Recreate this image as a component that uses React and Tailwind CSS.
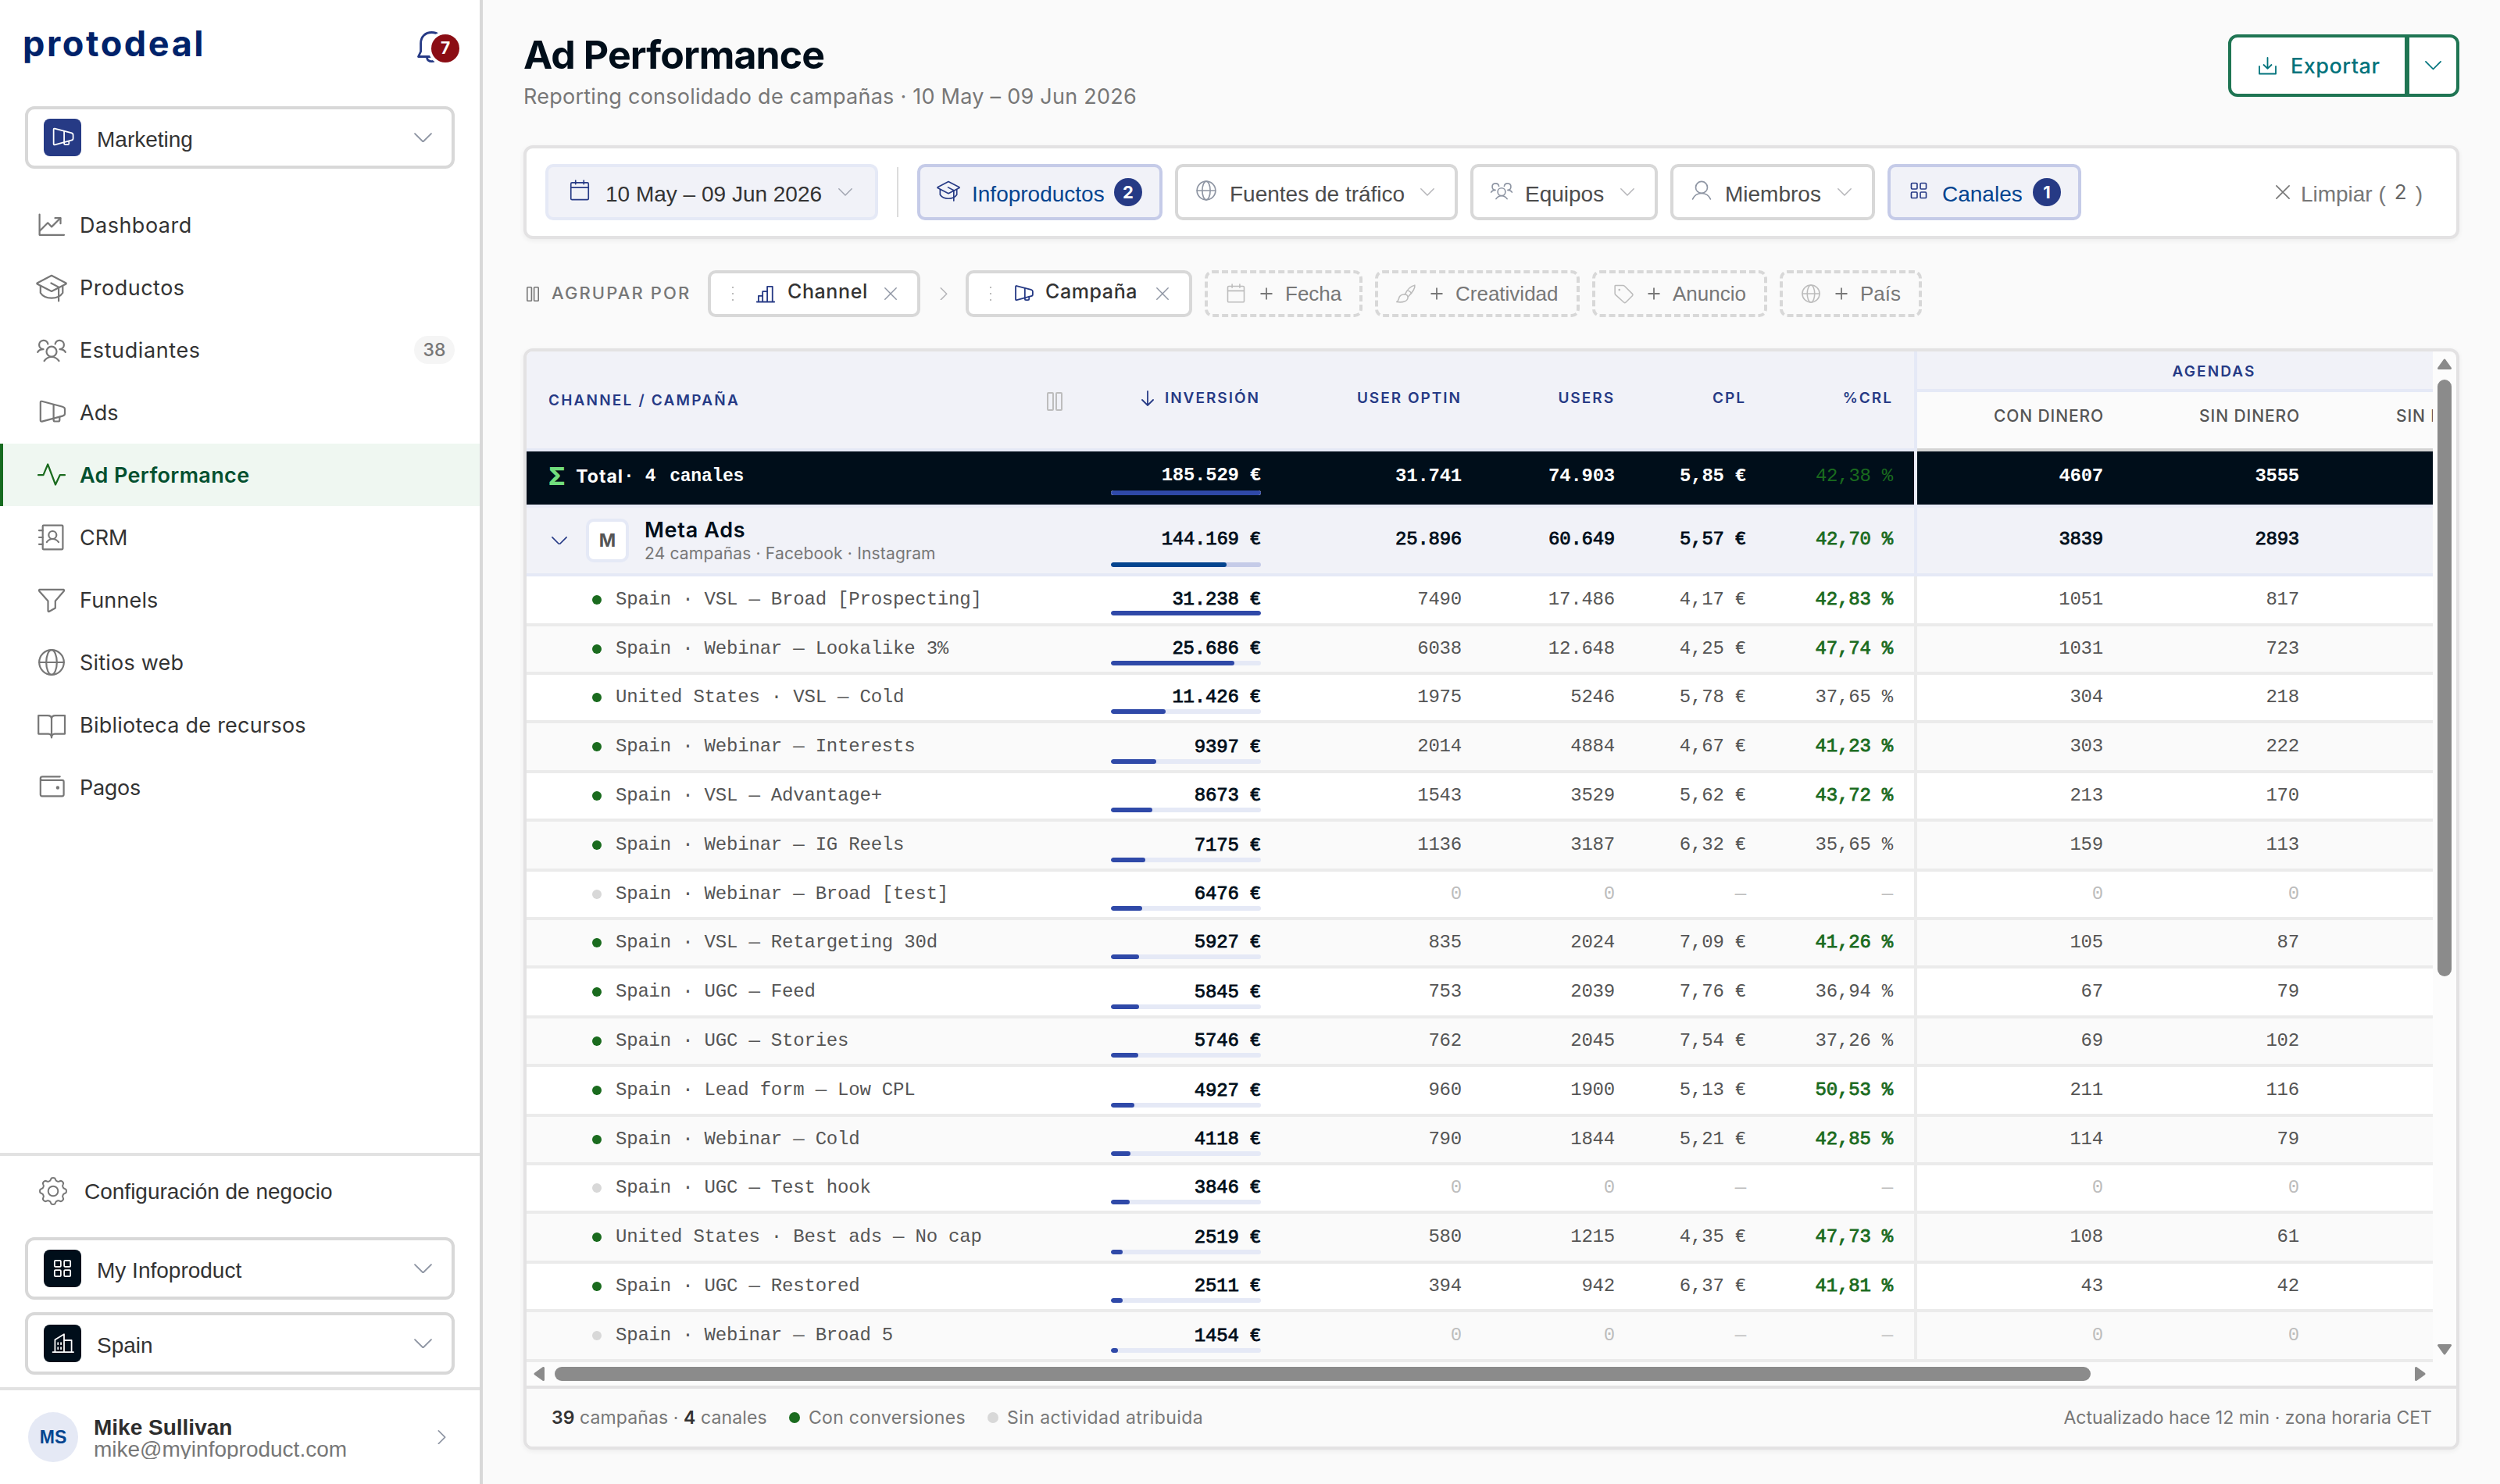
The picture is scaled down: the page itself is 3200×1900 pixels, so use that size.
import React from 'react';
import clsx from 'clsx';

// --- Icons (40x40 grid, thin strokes) ---

const Svg = ({ size = 40, sw = 2.2, className, children }) => (
  <svg
    width={size}
    height={size}
    viewBox="0 0 40 40"
    fill="none"
    stroke="currentColor"
    strokeWidth={sw}
    strokeLinecap="round"
    strokeLinejoin="round"
    className={clsx('shrink-0', className)}
  >
    {children}
  </svg>
);

const ChartIcon = (p) => (
  <Svg {...p}>
    <path d="M4.6 6.5V32.8H36" />
    <path d="M5 27.5 15.2 17.3 20.1 22.4 31.3 11.2" />
    <path d="M24.5 11.2H31.5V18.2" />
  </Svg>
);

const CapIcon = (p) => (
  <Svg {...p}>
    <path d="M20 4.8 1.5 14.4Q1.2 15 1.5 15.4L20 25 38.6 15.4Q38.9 15 38.6 14.4Z" />
    <path d="M5.8 18.5V27C8.5 31.2 13.5 33.6 20 33.6S31.5 31.2 34.3 27V18.5" />
    <path d="M19.4 14.5 29.1 19.6V37.4" />
  </Svg>
);

const PeopleIcon = (p) => (
  <Svg {...p}>
    <circle cx="20" cy="22.2" r="6.5" />
    <path d="M10.6 34.2C12.6 31 16 29 20 29S27.400 31 29.500 34.200" />
    <path d="M15.400 12.500A5.700 5.700 0 1 0 9.500 19.200M2.200 22.800C3.600 20.600 6 19.200 9.500 19.200" />
    <path d="M24.600 12.500A5.700 5.700 0 1 1 30.500 19.200M37.800 22.800C36.400 20.600 34 19.200 30.500 19.200" />
  </Svg>
);

const MegaphoneIcon = (p) => (
  <Svg {...p}>
    <path d="M7.600 5.800 34 12.700Q37 13.500 37 16V21.500Q37 24 34 24.600L7.800 31.600Q5.800 32 5.800 30.200V7.200Q5.800 5.400 7.600 5.800Z" />
    <path d="M22.600 10V28.200" />
    <path d="M22.600 28.500V29.700Q22.600 31.500 24.400 31.500H28.500Q30.300 31.500 30.300 29.700V25.800" />
  </Svg>
);

const PulseIcon = (p) => (
  <Svg {...p}>
    <path d="M3 20.200H9.500L15.200 6.500 25 32.500 30.700 20.200H37" />
  </Svg>
);

const ContactsIcon = (p) => (
  <Svg {...p}>
    <rect x="8.700" y="4.700" width="25.700" height="30.600" rx="1" />
    <path d="M4 11.200H8.700M4 20H8.700M4 28.800H8.700" />
    <circle cx="21.300" cy="17" r="5" />
    <path d="M13.800 26.200C15.500 23.600 18 22 21.300 22S27.200 23.600 29 26.200" />
  </Svg>
);

const FunnelIcon = (p) => (
  <Svg {...p}>
    <path d="M4.500 6.800H35.500Q36.500 7.800 35.600 9L24.800 21.500V30.500L16.800 35Q15.500 35.300 15.500 34V21.500L4.400 9Q3.500 7.800 4.500 6.800Z" />
  </Svg>
);

const GlobeIcon = (p) => (
  <Svg {...p}>
    <circle cx="20" cy="20" r="15.800" />
    <ellipse cx="20" cy="20" rx="6.800" ry="15.800" />
    <path d="M4.200 20H35.800" />
  </Svg>
);

const BookIcon = (p) => (
  <Svg {...p}>
    <path d="M3.200 8.200H15Q20 8.200 20 12.500 20 8.200 25 8.200H37V31.600H24Q20 31.600 20 36.500 20 31.600 16 31.600H3.200Z" />
    <path d="M20 12.500V33" />
  </Svg>
);

const WalletIcon = (p) => (
  <Svg {...p}>
    <path d="M30.700 6.300H8.500Q5.800 6.300 5.800 8.600 5.800 10.900 8.500 10.900H33.600Q35.600 10.900 35.600 12.900V29.300Q35.600 31.300 33.600 31.300H7.800Q5.800 31.300 5.800 29.300V8.600" />
    <circle cx="27.900" cy="20.500" r="1.100" fill="currentColor" />
  </Svg>
);

const GridIcon = (p) => (
  <Svg {...p}>
    <rect x="7.300" y="7.300" width="10" height="10" rx="1.500" />
    <rect x="22.700" y="7.300" width="10" height="10" rx="1.500" />
    <rect x="7.300" y="22.700" width="10" height="10" rx="1.500" />
    <rect x="22.700" y="22.700" width="10" height="10" rx="1.500" />
  </Svg>
);

const BuildingIcon = (p) => (
  <Svg {...p}>
    <path d="M4.500 34H37.500M8 34V14L22.500 5.200V34M22.500 15H34.500V34" />
    <path d="M12.800 19V21.500M17.600 19V21.500M12.800 26.500V29M17.600 26.500V29" />
  </Svg>
);

const CalendarIcon = (p) => (
  <Svg {...p}>
    <rect x="5" y="6.500" width="30" height="29" rx="2" />
    <path d="M5 14.800H35M13 2.800V9M27 2.800V9" />
  </Svg>
);

const UserIcon = (p) => (
  <Svg {...p}>
    <circle cx="20" cy="14.500" r="10" />
    <path d="M4.800 34.500C7.500 28.500 13 24.700 20 24.700S32.500 28.500 35.200 34.500" />
  </Svg>
);

const BarsIcon = (p) => (
  <Svg {...p}>
    <path d="M4 35H36M7 35V24H14.500V35M14.500 35V16H23V35M23 35V7H32.500V35" />
  </Svg>
);

const BrushIcon = (p) => (
  <Svg {...p}>
    <path d="M17.500 21.500C21 14 28 6 35.500 4.500 37 11 29 20 23 26" />
    <path d="M17.500 21.500C21 21.500 23.500 24 23 27.500 22 34 14 36.800 2.500 35 6.500 33.500 5.500 29 8 25 10 22.200 14 21 17.500 21.500Z" />
    <path d="M24 14.500Q28 16.500 29.500 19.500" />
  </Svg>
);

const TagIcon = (p) => (
  <Svg {...p}>
    <path d="M4.500 6Q4.500 5 5.500 5H19.500Q21 5 22 6L36.500 20.500Q37.800 22 36.500 23.500L24 36Q22.500 37.200 21 36L5.500 22Q4.500 21 4.500 19.500Z" />
    <circle cx="12.500" cy="13" r=".8" fill="currentColor" />
  </Svg>
);

const ColumnsIcon = ({ className }) => (
  <svg viewBox="0 0 20 24" fill="none" stroke="currentColor" strokeWidth="2" className={className} preserveAspectRatio="none">
    <rect x="1" y="1" width="7" height="22" rx="1" />
    <rect x="12" y="1" width="7" height="22" rx="1" />
  </svg>
);

const Chevron = ({ className }) => (
  <svg viewBox="0 0 22 12" fill="none" stroke="currentColor" strokeWidth="1.800" strokeLinecap="round" strokeLinejoin="round" className={clsx('shrink-0', className)}>
    <path d="M1 1 11 11 21 1" />
  </svg>
);

const ChevronRight = ({ className }) => (
  <svg viewBox="0 0 12 20" fill="none" stroke="currentColor" strokeWidth="1.800" strokeLinecap="round" strokeLinejoin="round" className={clsx('shrink-0', className)}>
    <path d="M1.500 1 10.500 10 1.500 19" />
  </svg>
);

const Cross = ({ className }) => (
  <svg viewBox="0 0 20 20" fill="none" stroke="currentColor" strokeWidth="1.800" strokeLinecap="round" className={clsx('shrink-0', className)}>
    <path d="M1 1 19 19M19 1 1 19" />
  </svg>
);

const Plus = ({ className }) => (
  <svg viewBox="0 0 16 16" fill="none" stroke="currentColor" strokeWidth="1.800" className={clsx('shrink-0', className)}>
    <path d="M8 .5V15.500M.5 8H15.500" />
  </svg>
);

// scalloped cog outline
const COG = Array.from({ length: 97 }, (_, i) => {
  const a = (i / 96) * Math.PI * 2;
  const r = 17 + 1.9 * Math.tanh(2 * Math.cos(8 * a));
  return `${i ? 'L' : 'M'}${(20 + r * Math.sin(a)).toFixed(2)} ${(20 - r * Math.cos(a)).toFixed(2)}`;
}).join('');

const CogIcon = (p) => (
  <Svg {...p}>
    <path d={COG} />
    <circle cx="20" cy="20" r="7" />
  </Svg>
);

// --- Data ---

const NAV = [
  { label: 'Dashboard', icon: ChartIcon, track: 'tracking-[0.5px]' },
  { label: 'Productos', icon: CapIcon, track: 'tracking-[0.5px]' },
  { label: 'Estudiantes', icon: PeopleIcon, badge: '38', track: 'tracking-[0.6px]' },
  { label: 'Ads', icon: MegaphoneIcon, track: 'tracking-normal' },
  { label: 'Ad Performance', icon: PulseIcon, active: true, track: 'tracking-[0.35px]' },
  { label: 'CRM', icon: ContactsIcon, track: 'tracking-normal' },
  { label: 'Funnels', icon: FunnelIcon, track: 'tracking-[0.15px]' },
  { label: 'Sitios web', icon: GlobeIcon, track: 'tracking-[0.2px]' },
  { label: 'Biblioteca de recursos', icon: BookIcon, track: 'tracking-[0.25px]' },
  { label: 'Pagos', icon: WalletIcon, track: 'tracking-[-0.3px]' },
];

const ROWS = [
  ['Spain · VSL — Broad [Prospecting]', 31238, '7490', '17.486', '4,17 €', '42,83 %', '1051', '817', 64],
  ['Spain · Webinar — Lookalike 3%', 25686, '6038', '12.648', '4,25 €', '47,74 %', '1031', '723', 62],
  ['United States · VSL — Cold', 11426, '1975', '5246', '5,78 €', '37,65 %', '304', '218', 62],
  ['Spain · Webinar — Interests', 9397, '2014', '4884', '4,67 €', '41,23 %', '303', '222', 64],
  ['Spain · VSL — Advantage+', 8673, '1543', '3529', '5,62 €', '43,72 %', '213', '170', 62],
  ['Spain · Webinar — IG Reels', 7175, '1136', '3187', '6,32 €', '35,65 %', '159', '113', 64],
  ['Spain · Webinar — Broad [test]', 6476, '0', '0', '—', '—', '0', '0', 62],
  ['Spain · VSL — Retargeting 30d', 5927, '835', '2024', '7,09 €', '41,26 %', '105', '87', 62],
  ['Spain · UGC — Feed', 5845, '753', '2039', '7,76 €', '36,94 %', '67', '79', 64],
  ['Spain · UGC — Stories', 5746, '762', '2045', '7,54 €', '37,26 %', '69', '102', 62],
  ['Spain · Lead form — Low CPL', 4927, '960', '1900', '5,13 €', '50,53 %', '211', '116', 64],
  ['Spain · Webinar — Cold', 4118, '790', '1844', '5,21 €', '42,85 %', '114', '79', 62],
  ['Spain · UGC — Test hook', 3846, '0', '0', '—', '—', '0', '0', 62],
  ['United States · Best ads — No cap', 2519, '580', '1215', '4,35 €', '47,73 %', '108', '61', 64],
  ['Spain · UGC — Restored', 2511, '394', '942', '6,37 €', '41,81 %', '43', '42', 62],
  ['Spain · Webinar — Broad 5', 1454, '0', '0', '—', '—', '0', '0', 64],
];

const money = (n) => `${n >= 10000 ? `${Math.floor(n / 1000)}.${String(n % 1000).padStart(3, '0')}` : n} €`;

const COLS = 'grid grid-cols-[712px_254px_258px_196px_168px_192px_265px_251px_244px]';
const ARIAL = "font-['Liberation_Sans',sans-serif]";
const MONO = "font-['Liberation_Mono',monospace]";
// the mono face has no medium weight, thicken the regular one a little
const MEDIUM = '[-webkit-text-stroke:0.8px_currentColor]';

// --- Sidebar ---

const SidebarSelect = ({ label, icon: Icon, dark }) => (
  <div className="flex h-20 w-[550px] items-center rounded-xl border-4 border-[#d8d8d8] bg-white pl-5 pr-[25px]">
    <span className={clsx('flex size-12 items-center justify-center rounded-lg text-white', dark ? 'bg-[#000e1a]' : 'bg-[#263a85]')}>
      <Icon size={32} sw={2.2} />
    </span>
    <span className={`${ARIAL} ml-5 pt-[5px] text-[28px] leading-8 text-[#333]`}>{label}</span>
    <Chevron className="ml-auto w-[23px] text-[#8e95a3]" />
  </div>
);

const Sidebar = () => (
  <aside className="flex h-full w-[618px] shrink-0 flex-col border-r-4 border-[#d8d8d8] bg-white">
    <div className="flex h-[110px] items-center justify-between pl-[29px] pr-[26px]">
      <span className="text-[45px] font-bold leading-none tracking-[2.6px] text-[#00226a]">protodeal</span>
      <div className="relative h-11 w-[54px] translate-y-[7px]">
        <svg width="40" height="42" viewBox="0 0 40 42" fill="none" stroke="#263a85" strokeWidth="2.800" strokeLinejoin="round" strokeLinecap="round">
          <path d="M1.500 32.500 4.600 26V15.500C4.600 7 10.500 1.500 18.500 1.500S32.400 7 32.400 15.500V26L35.500 32.500Z" />
          <path d="M12.500 34C13 37 15.500 38.600 18.500 38.600S24 37 24.500 34" />
        </svg>
        <span className="absolute left-[18px] top-[4px] flex size-9 items-center justify-center rounded-full bg-[#8b0d14] text-[21px] font-bold text-white ring-4 ring-white">7</span>
      </div>
    </div>

    <div className="mt-[26px] pl-8">
      <SidebarSelect label="Marketing" icon={MegaphoneIcon} />
    </div>

    <nav className="mt-8">
      {NAV.map(({ label, icon: Icon, badge, active, track }) => (
        <div
          key={label}
          className={clsx('flex h-20 items-center border-l-4 pl-[42px] pr-8', active ? 'border-[#166b1f] bg-[#eff7f1]' : 'border-transparent')}
        >
          <Icon size={40} className={active ? 'text-[#1a6b1e]' : 'text-[#777]'} />
          <span className={clsx('ml-4 pt-[2px] text-[27px]', track, active ? 'font-semibold text-[#03502f]' : 'text-[#333]')}>{label}</span>
          {badge && (
            <span className="ml-auto flex h-9 w-[52px] items-center justify-center rounded-full bg-[#f5f5f5] text-[23px] font-medium text-[#777]">{badge}</span>
          )}
        </div>
      ))}
    </nav>

    <div className="mt-auto border-t-4 border-[#e2e2e2]">
      <div className="flex h-[84px] items-center pl-[50px] pt-[5px]">
        <CogIcon size={36} className="text-[#777]" />
        <span className={`${ARIAL} ml-[22px] pt-[3px] text-[28px] leading-8 text-[#333]`}>Configuración de negocio</span>
      </div>
      <div className="mt-5 flex flex-col gap-4 pb-4 pl-8">
        <SidebarSelect label="My Infoproduct" icon={GridIcon} dark />
        <SidebarSelect label="Spain" icon={BuildingIcon} dark />
      </div>
    </div>

    <div className="flex h-[124px] items-center border-t-4 border-[#e2e2e2] pl-9 pr-[43px]">
      <span className={`${ARIAL} flex size-16 items-center justify-center rounded-full bg-[#e5e9f5] text-[23px] font-bold text-[#04448f]`}>MS</span>
      <div className={`${ARIAL} ml-5 text-[28px] leading-7`}>
        <div className="pt-[2px] font-bold text-[#2e2e2e]">Mike Sullivan</div>
        <div className="h-[26px] overflow-hidden text-[#777]">mike@myinfoproduct.com</div>
      </div>
      <ChevronRight className="ml-auto w-[11px] text-[#8e95a3]" />
    </div>
  </aside>
);

// --- Filters ---

const FilterButton = ({ label, icon: Icon, width, count }) => (
  <div
    className={clsx(
      'flex h-[72px] items-center rounded-[10px] border-4 pl-[21px]',
      width,
      count ? 'border-[#c5cbe8] bg-[#f1f2f8] pr-[22px] text-[#04448f]' : 'border-[#d8d8d8] bg-white pr-[26px] text-[#4c4c4c]'
    )}
  >
    <Icon size={30} className={clsx('-translate-y-[2px]', count ? 'text-[#263a85]' : 'text-[#8e95a3]')} />
    <span className={`${ARIAL} ml-[15px] whitespace-nowrap pt-[5px] text-[28px] leading-8`}>{label}</span>
    {count ? (
      <span className="ml-auto flex size-9 items-center justify-center rounded-full bg-[#263a85] text-[22px] font-bold text-white">{count}</span>
    ) : (
      <Chevron className="ml-auto w-[18px] text-[#b4b4b8]" />
    )}
  </div>
);

const FilterBar = () => (
  <div className="mt-[42px] flex h-[120px] items-center rounded-xl border-4 border-[#e3e2e3] bg-white px-6 shadow-[0_2px_6px_rgba(0,0,0,0.06)]">
    <div className="flex h-[72px] w-[426px] items-center rounded-[10px] border-4 border-[#e5e9f6] bg-[#f1f2f8] pl-[25px] pr-[29px]">
      <CalendarIcon size={30} className="-translate-y-[2px] text-[#263a85]" />
      <span className={`${ARIAL} ml-[18px] whitespace-nowrap pt-[5px] text-[28px] leading-8 text-[#333]`}>10 May – 09 Jun 2026</span>
      <Chevron className="ml-auto w-[18px] text-[#a0a4b0]" />
    </div>
    <div className="mx-6 h-16 w-[2px] bg-[#dcdcdc]" />
    <div className="flex gap-4">
      <FilterButton label="Infoproductos" icon={CapIcon} width="w-[314px]" count={2} />
      <FilterButton label="Fuentes de tráfico" icon={GlobeIcon} width="w-[362px]" />
      <FilterButton label="Equipos" icon={PeopleIcon} width="w-[240px]" />
      <FilterButton label="Miembros" icon={UserIcon} width="w-[262px]" />
      <FilterButton label="Canales" icon={GridIcon} width="w-[248px]" count={1} />
    </div>
    <div className={`${ARIAL} ml-auto flex items-center pr-[19px] text-[28px] leading-8 text-[#777]`}>
      <Cross className="w-[18px]" />
      <span className="ml-[14px] pt-[5px]">Limpiar (</span>
      <span className="mx-[11px] font-['Inter'] text-[26px] text-[#666]">2</span>
      <span className="pt-[5px]">)</span>
    </div>
  </div>
);

const GroupChip = ({ label, icon: Icon, width }) => (
  <div className={clsx('flex h-[60px] items-center rounded-[10px] border-4 border-[#d8d8d8] bg-white pr-[26px]', width)}>
    <div className="ml-[27px] flex h-[18px] w-[2px] flex-col justify-between">
      <span className="h-[2px] bg-[#bbb]" />
      <span className="h-[2px] bg-[#bbb]" />
      <span className="h-[2px] bg-[#bbb]" />
    </div>
    <Icon size={28} sw={2.6} className="ml-[27px] text-[#263a85]" />
    <span className="ml-[14px] pb-[5px] text-[25px] font-medium tracking-[0.6px] text-[#333]">{label}</span>
    <Cross className="ml-auto w-4 text-[#8e95a3]" />
  </div>
);

const AddChip = ({ label, icon: Icon, width }) => (
  <div className={clsx('flex h-[60px] items-center rounded-[10px] border-4 border-dashed border-[#d8d8d8] pl-[22px] text-[#777]', width)}>
    <Icon size={28} className="text-[#bcbcbc]" />
    <Plus className="ml-[17px] w-4" />
    <span className={`${ARIAL} ml-4 text-[26px] leading-8`}>{label}</span>
  </div>
);

const GroupRow = () => (
  <div className="mt-10 flex h-[60px] items-center">
    <ColumnsIcon className="ml-1 h-[19px] w-4 text-[#777]" />
    <span className="ml-4 w-[200px] pb-[2px] text-[22px] font-medium tracking-[2.1px] text-[#777]">AGRUPAR POR</span>
    <GroupChip label="Channel" icon={BarsIcon} width="w-[272px]" />
    <ChevronRight className="ml-[25px] mr-[23px] w-[10px] text-[#b4b4b8]" />
    <GroupChip label="Campaña" icon={MegaphoneIcon} width="w-[290px]" />
    <div className="ml-4 flex gap-4">
      <AddChip label="Fecha" icon={CalendarIcon} width="w-[202px]" />
      <AddChip label="Creatividad" icon={BrushIcon} width="w-[262px]" />
      <AddChip label="Anuncio" icon={TagIcon} width="w-[224px]" />
      <AddChip label="País" icon={GlobeIcon} width="w-[182px]" />
    </div>
  </div>
);

// --- Table ---

const Bar = ({ pct, fill = 'bg-[#2f49a8]', track = 'bg-[#e5e9f6]' }) => (
  <div className={clsx('h-[6px] w-48 shrink-0 overflow-hidden rounded-full', track)}>
    <div className={clsx('h-full rounded-full', fill)} style={{ width: `${pct}%` }} />
  </div>
);

const Num = ({ children, className }) => (
  <div className={clsx('flex items-center justify-end pr-[27px]', (children === '0' || children === '—') && 'text-[#bdbdbd]', className)}>
    {children}
  </div>
);

const HeadCell = ({ children, className }) => (
  <div className={clsx('row-span-2 flex items-center justify-end border-b-4 border-[#e5e9f6] bg-[#f1f2f8] pb-1 pr-[27px] text-[19px] font-semibold tracking-[2px] text-[#263a85]', className)}>
    {children}
  </div>
);

const SubHead = ({ children }) => (
  <div className="flex items-center justify-end whitespace-nowrap border-b-4 border-[#d4d4d4] bg-[#fbfbfb] pb-[11px] pr-[26px] text-[21px] font-medium tracking-[0.9px] text-[#555]">
    {children}
  </div>
);

const TableHead = () => (
  <div className={`${COLS} grid-rows-[52px_76px]`}>
    <div className="row-span-2 flex items-center justify-between border-b-4 border-[#e5e9f6] bg-[#f1f2f8] pl-7 pr-[26px] pt-[3px] text-[19px] font-semibold tracking-[2.2px] text-[#263a85]">
      CHANNEL / CAMPAÑA
      <ColumnsIcon className="h-6 w-5 text-[#bdbdbd]" />
    </div>
    <HeadCell className="text-[#000e1a]">
      <svg width="16" height="20" viewBox="0 0 16 20" fill="none" stroke="#263a85" strokeWidth="1.800" strokeLinecap="round" className="mr-[14px]">
        <path d="M8 1V19M1 12 8 19 15 12" />
      </svg>
      INVERSIÓN
    </HeadCell>
    <HeadCell>USER OPTIN</HeadCell>
    <HeadCell>USERS</HeadCell>
    <HeadCell>CPL</HeadCell>
    <HeadCell className="border-r-4">%CRL</HeadCell>
    <div className="col-span-3 flex items-center justify-center border-b-4 border-[#e5e9f6] bg-[#f1f2f8] pt-1 text-[19px] font-semibold tracking-[2.1px] text-[#263a85]">
      AGENDAS
    </div>
    <SubHead>CON DINERO</SubHead>
    <SubHead>SIN DINERO</SubHead>
    <div className="flex items-center whitespace-nowrap border-b-4 border-[#d4d4d4] bg-[#fbfbfb] pb-[11px] pl-[97px] text-[21px] font-medium tracking-[0.9px] text-[#555]">
      SIN LLAMADA
    </div>
  </div>
);

const TotalRow = () => (
  <div className={`${COLS} ${MONO} h-[72px] bg-[#000e1a] text-[24px] font-bold leading-6 tracking-[-0.25px] text-white *:border-b-4 *:border-[#e9ebf7]`}>
    <div className="flex items-center pb-[5px] pl-7">
      <span className="font-['Inter'] text-[31px] font-extrabold leading-6 text-[#71dd7d]">Σ</span>
      <span className="ml-[14px] font-['Inter'] text-[23px] tracking-[1px]">Total</span>
      <span className="text-[23px]">·</span>
      <span className="ml-[14px] text-[23px]">4</span>
      <span className="ml-[18px] text-[23px]">canales</span>
    </div>
    <div className="flex flex-col items-end justify-end gap-[7px] pb-3 pr-[26px]">
      185.529 €
      <Bar pct={100} />
    </div>
    <Num className="pb-[5px]">31.741</Num>
    <Num className="pb-[5px]">74.903</Num>
    <Num className="pb-[5px]">5,85 €</Num>
    <Num className="border-r-4 pb-[5px] font-normal text-[#1a6b1e]">42,38 %</Num>
    <Num className="pb-[5px]">4607</Num>
    <Num className="pb-[5px]">3555</Num>
    <Num />
  </div>
);

const ChannelRow = () => (
  <div className={`${COLS} ${MONO} ${MEDIUM} h-[88px] bg-[#f1f2f8] text-[24px] leading-6 tracking-[-0.25px] text-[#000e1a] *:border-b-4 *:border-[#e5e9f6]`}>
    <div className="flex items-center pl-8 font-['Inter'] tracking-normal [-webkit-text-stroke:0]">
      <Chevron className="w-5 text-[#263a85]" />
      <span className="ml-6 flex h-14 w-[55px] items-center justify-center rounded-[10px] border-4 border-[#e5e9f6] bg-white text-[23px] font-bold text-[#555]">M</span>
      <div className="ml-5">
        <div className="pt-[2px] text-[27px] font-semibold leading-8 tracking-[0.7px]">Meta Ads</div>
        <div className="text-[21px] leading-7 tracking-[0.18px] text-[#777]">24 campañas · Facebook · Instagram</div>
      </div>
    </div>
    <div className="flex flex-col items-end justify-end gap-[17px] pb-2 pr-[26px]">
      144.169 €
      <Bar pct={77.2} fill="bg-[#04448f]" track="bg-[#c5cbe8]" />
    </div>
    <Num className="pb-[3px]">25.896</Num>
    <Num className="pb-[3px]">60.649</Num>
    <Num className="pb-[3px]">5,57 €</Num>
    <Num className="border-r-4 pb-[3px] text-[#1a6b1e]">42,70 %</Num>
    <Num className="pb-[3px]">3839</Num>
    <Num className="pb-[3px]">2893</Num>
    <Num />
  </div>
);

const CampaignRow = ({ row, index }) => {
  const [name, spend, optin, users, cpl, crl, withMoney, noMoney, height] = row;
  const idle = optin === '0';
  return (
    <div
      className={clsx(
        COLS,
        MONO,
        'text-[24px] leading-6 tracking-[-0.2px] text-[#555] *:border-b-4 *:border-[#ebebeb]',
        height === 64 ? 'h-16' : 'h-[62px]',
        index % 2 ? 'bg-[#fafafa]' : 'bg-white'
      )}
    >
      <div className="flex items-center pl-[84px]">
        <span className={clsx('size-3 rounded-full', idle ? 'bg-[#d8d8d8]' : 'bg-[#1a6b1e]')} />
        <span className="ml-[18px] whitespace-pre">{name}</span>
      </div>
      <div className={clsx('flex flex-col items-end justify-end pr-[26px] text-[#000e1a]', MEDIUM, index ? 'gap-[3px] pb-2' : 'gap-[2px] pb-[10px]')}>
        {money(spend)}
        <Bar pct={(spend / 31238) * 100} />
      </div>
      <Num>{optin}</Num>
      <Num>{users}</Num>
      <Num>{cpl}</Num>
      <Num className={clsx('border-r-4 border-r-[#e5e9f6]', parseFloat(crl) > 40 && [MEDIUM, 'text-[#1a6b1e]'])}>{crl}</Num>
      <Num>{withMoney}</Num>
      <Num>{noMoney}</Num>
      <Num />
    </div>
  );
};

const Arrow = ({ d, w, h }) => (
  <svg width={w} height={h} viewBox={`0 0 ${w} ${h}`} fill="#8b8b8b" stroke="#8b8b8b" strokeWidth="3" strokeLinejoin="round">
    <path d={d} />
  </svg>
);

const PerformanceTable = () => (
  <div className="mt-10 flex h-[1410px] flex-col overflow-hidden rounded-xl border-4 border-[#e3e2e3] bg-[#fcfcfc] shadow-[0_2px_6px_rgba(0,0,0,0.06)]">
    <div className="flex h-[1294px]">
      <div className="w-[2440px] overflow-hidden">
        <div className="w-[2540px]">
          <TableHead />
          <TotalRow />
          <ChannelRow />
          {ROWS.map((row, i) => (
            <CampaignRow key={row[0]} row={row} index={i} />
          ))}
        </div>
      </div>
      <div className="flex w-[30px] flex-col items-center pb-[9px] pt-[9px]">
        <Arrow w={18} h={14} d="M9 2 16.500 12.500H1.500Z" />
        <div className="mt-[13px] h-[764px] w-[18px] rounded-full bg-[#8b8b8b]" />
        <div className="mt-auto">
          <Arrow w={18} h={14} d="M9 12 16.500 1.500H1.500Z" />
        </div>
      </div>
    </div>
    <div className="flex h-[30px] items-center pl-[9px] pr-[39px]">
      <Arrow w={14} h={18} d="M2 9 12.500 1.500V16.500Z" />
      <div className="ml-[13px] h-[18px] w-[1966px] rounded-full bg-[#8b8b8b]" />
      <div className="ml-auto">
        <Arrow w={14} h={18} d="M12 9 1.500 1.500V16.500Z" />
      </div>
    </div>
    <div className="flex flex-1 items-center border-t-4 border-[#e3e2e3] bg-[#fafafa] pl-8 pr-[31px] text-[23px] text-[#777]">
      <span className="w-[304px] whitespace-nowrap tracking-[0.1px]">
        <b className="font-semibold text-[#333]">39</b> campañas · <b className="font-semibold text-[#333]">4</b> canales
      </span>
      <span className="size-[14px] rounded-full bg-[#1a6b1e]" />
      <span className="ml-[11px] w-[229px] tracking-[0.3px]">Con conversiones</span>
      <span className="size-[14px] rounded-full bg-[#d8d8d8]" />
      <span className="ml-[11px] tracking-[0.45px]">Sin actividad atribuida</span>
      <span className="ml-auto tracking-[0.04px]">Actualizado hace 12 min · zona horaria CET</span>
    </div>
  </div>
);

export default function App() {
  return (
    <div className="flex h-[1900px] w-[3200px] overflow-hidden bg-[#fafafa] font-['Inter',sans-serif]">
      <Sidebar />

      <main className="flex flex-1 flex-col px-[52px] pt-10">
        <header className="flex justify-between">
          <div>
            <h1 className="text-[50px] font-bold leading-[60px] tracking-[-0.9px] text-[#000e1a]">Ad Performance</h1>
            <p className="mt-1 text-[27px] leading-10 tracking-[0.25px] text-[#777]">Reporting consolidado de campañas · 10 May – 09 Jun 2026</p>
          </div>
          <div className="mt-1 flex h-20 w-[296px] overflow-hidden rounded-xl border-4 border-[#1f7553] bg-white text-[#00737c]">
            <div className="flex w-[222px] items-center pl-[35px]">
              <svg width="23" height="23" viewBox="0 0 23 23" fill="none" stroke="currentColor" strokeWidth="1.800" strokeLinecap="round" strokeLinejoin="round">
                <path d="M11.500 1V14.500M6.500 10 11.500 14.800 16.500 10M1 12V21.500H22V12" />
              </svg>
              <span className="ml-[18px] pt-[2px] text-[27px] font-medium tracking-[0.5px]">Exportar</span>
            </div>
            <div className="flex flex-1 items-center justify-center border-l-6 border-[#1f7553]">
              <Chevron className="w-[21px]" />
            </div>
          </div>
        </header>

        <FilterBar />
        <GroupRow />
        <PerformanceTable />
      </main>
    </div>
  );
}
